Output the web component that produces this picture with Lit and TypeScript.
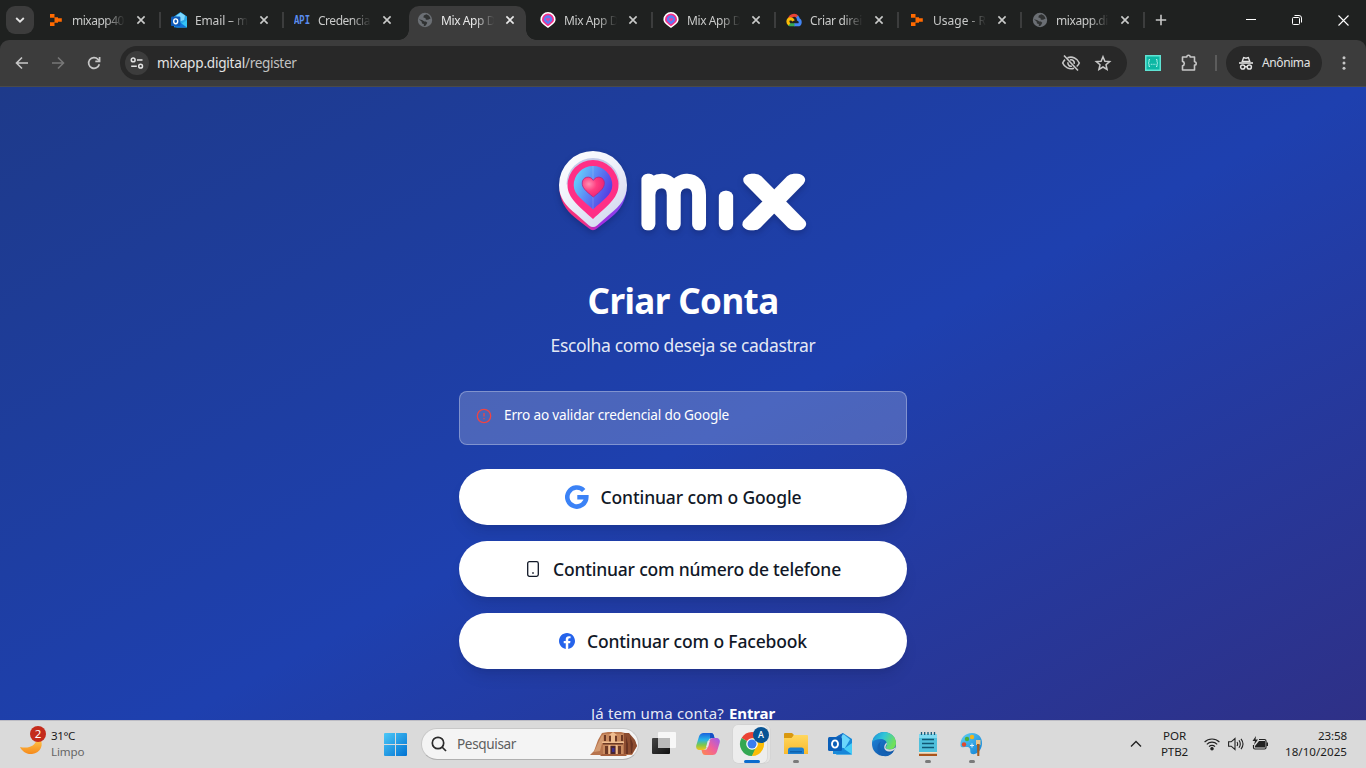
import { LitElement, html, css, svg } from "lit";

/** One line of text whose tracking is tuned so that it spans exactly `w` pixels. */
class FitText extends LitElement {
  static properties = { w: { type: Number } };
  declare w: number;
  static styles = css`
    :host { display: inline-block; white-space: nowrap; flex: none; }
  `;
  render() {
    return html`<span><slot></slot></span>`;
  }
  firstUpdated() {
    const n = (this.textContent || "").length;
    const span = this.renderRoot.querySelector("span") as HTMLElement;
    const natural = span.getBoundingClientRect().width;
    if (!n || !natural) return;
    this.style.letterSpacing = ((this.w - natural) / n).toFixed(3) + "px";
    this.style.width = this.w + "px";
  }
}
customElements.define("fit-text", FitText);

const crumbs = svg`<path fill="#ff6a00" d="M2 2h4.500v3.200H10V6.300h3.800v3.400H10v1.100H6.500V14H2v-3.800h4V5.800H2z"/><path fill="#1f2120" d="M6 5.600h1v4.600H6z" opacity=".5"/>`;
const outlookShape = svg`
  <path fill="#28a8ea" d="M3 4.500 9.500 0 16 4.500V15H3z"/><path fill="#7fd8ff" d="M5.500 3.500 9.700.7 14 3.500 13 8 9 9.500 5 8z"/>
  <path fill="#35c5f5" d="M16 6v9.400H5L16 8z"/><path fill="#1173d8" d="m3 15.600 4-6.500 9 6.500z"/>
  <rect x="0" y="4.500" width="9.400" height="9.600" rx="1.200" fill="#0f5bb8"/>
  <ellipse cx="4.700" cy="9.300" rx="2" ry="2.400" fill="none" stroke="#fff" stroke-width="1.400"/>`;
const globe = svg`<circle cx="8" cy="8" r="7.200" fill="#6b6f74"/>
  <path fill="#303232" d="M9.500 2.200 6.800 3.600l-.4 2 2 .5.5 1.600H11l2.600-1.300A6.200 6.200 0 0 0 9.500 2.200zM1.900 7.200 5 8l2.400 1.600h1.500l1.400 1.200-1.500 2.600-2 .8V12L5 11.400 4.600 9.600z"/>`;
const pin = svg`
  <path fill="#fff" d="M8 0a7.600 7.600 0 0 1 7.600 7.600c0 3.600-4 5.700-7.600 8.400C4.400 13.300.4 11.200.4 7.600A7.600 7.600 0 0 1 8 0z"/>
  <path fill="#f5318c" d="M8 1.500a6 6 0 0 1 6 6c0 2.700-3.200 4.500-6 6.800C5.200 12 2 10.200 2 7.500A6 6 0 0 1 8 1.500z"/>
  <path fill="#5b7cf5" d="M8 3.300a4.200 4.200 0 0 1 4.200 4.200c0 2-2.200 3.300-4.200 4.700-2-1.400-4.200-2.700-4.200-4.700A4.200 4.200 0 0 1 8 3.300z"/>
  <path fill="#e8409f" d="M8 9.500 6 7.600c-.7-1.200 1-2.300 2-1 1-1.300 2.700-.2 2 1z"/>`;
const cloud = svg`<g fill="none" stroke-width="3">
  <path stroke="#ea4335" d="M3.500 6.500A4.700 4.700 0 0 1 11.500 5"/><path stroke="#4285f4" d="M11 4.600c1 .8 1.300 1.700 1.400 2.900 2.500 1 2.600 5.300-.8 5.300H8"/>
  <path stroke="#34a853" d="M8.500 12.800H5c-1 0-1.600-.2-2.200-.6"/><path stroke="#fbbc05" d="M3.500 12.400C1 10.600 1.500 7 4.500 6.800c2 0 2.500 1 3 2"/></g>`;
const apiIcon = svg`<text x="0" y="12" font-family="Liberation Mono, monospace" font-weight="700" font-size="12" textLength="16" lengthAdjust="spacingAndGlyphs" fill="#5a8dee">API</text>`;

interface Tab { icon: unknown; label: string; active?: boolean; sep: boolean; w: number; }
const TABS: Tab[] = [
  { icon: crumbs, label: "mixapp40", sep: true, w: 52 },
  { icon: outlookShape, label: "Email – m", sep: true, w: 53 },
  { icon: apiIcon, label: "Credencia", sep: false, w: 52 },
  { icon: globe, label: "Mix App D", active: true, sep: false, w: 54 },
  { icon: pin, label: "Mix App D", sep: true, w: 54 },
  { icon: pin, label: "Mix App D", sep: true, w: 54 },
  { icon: cloud, label: "Criar direi", sep: true, w: 52 },
  { icon: crumbs, label: "Usage - R", sep: true, w: 53 },
  { icon: globe, label: "mixapp.di", sep: true, w: 52 },
];

class BrowserChrome extends LitElement {
  static styles = css`
    :host { display: block; height: 87px; font: 12px/16px "Noto Sans", sans-serif; color: #e3e3e3; flex: none; }
    svg { display: block; flex: none; }
    .strip { display: flex; height: 40px; background: #1f2120; padding-left: 6px; box-sizing: border-box; }
    .search { width: 28px; height: 28px; margin: 6px 6px 0 0; border-radius: 9px; background: #3c3c3c; display: grid; place-items: center; }
    .tab { width: 117px; height: 34px; margin: 6px 0 0; padding: 0 0 6px 8px; display: flex; align-items: center; box-sizing: border-box; color: #c9cac9; position: relative; }
    .tab.active { background: #3c3c3c; color: #e8e8e8; border-radius: 10px 10px 0 0; }
    .tab.active::before, .tab.active::after { content: ""; position: absolute; bottom: 0; width: 10px; height: 10px; }
    .tab.active::before { left: -10px; background: radial-gradient(circle at 0 0, transparent 9.5px, #3c3c3c 10px); }
    .tab.active::after { right: -10px; background: radial-gradient(circle at 100% 0, transparent 9.5px, #3c3c3c 10px); }
    .label { width: 56px; margin: 1px 8px 0 8px; -webkit-mask-image: linear-gradient(90deg, #000 60%, transparent 95%); mask-image: linear-gradient(90deg, #000 60%, transparent 95%); }
    .label fit-text { display: block; }
    .sep { width: 2px; height: 16px; margin: 12px 2px 0; background: #3c3d3d; }
    .sep.off { background: none; }
    .plus { margin: 14px 0 0 8px; }
    .win { margin-left: auto; display: flex; width: 138px; height: 40px; }
    .win span { flex: 1; display: grid; place-items: center; }
    .under { background: #1f2120; }
    .bar { display: flex; align-items: center; height: 47px; box-sizing: border-box; background: #3c3c3c; border-bottom: 1px solid #4a4a49; border-radius: 9px 9px 0 0; padding: 0 0 1px 14px; }
    .nav { display: flex; gap: 20px; margin-right: 18px; }
    .omni { width: 1007px; height: 34px; border-radius: 17px; background: #282828; display: flex; align-items: center; padding-left: 5px; box-sizing: border-box; }
    .chip { width: 24px; height: 24px; border-radius: 50%; background: #3c3c3c; display: grid; place-items: center; margin-right: 8px; }
    .url { font-size: 13.600px; line-height: 18px; }
    .path { color: #c2c2c2; }
    .tools { display: flex; gap: 12px; margin: 0 14px 0 auto; }
    .ext { margin-left: 18px; }
    .puzzle { margin-left: 18px; }
    .bar-sep { width: 2px; height: 16px; margin: 0 9px 0 16px; background: #5c5c5c; }
    .incog { width: 96px; height: 34px; border-radius: 17px; background: #282828; display: flex; align-items: center; gap: 8px; padding-left: 12px; box-sizing: border-box; }
    .dots { margin-left: 14px; }
  `;
  render() {
    return html`
      <div class="strip">
        <div class="search"><svg width="10" height="8" viewBox="0 0 10 8"><path d="M1.200 2 5 5.700 8.800 2" fill="none" stroke="#e3e3e3" stroke-width="1.800"/></svg></div>
        ${TABS.map((t) => html`
          <div class="tab ${t.active ? "active" : ""}">
            <svg width="16" height="16" viewBox="0 0 16 16">${t.icon}</svg>
            <div class="label"><fit-text w=${t.w}>${t.label}</fit-text></div>
            <svg width="10" height="10" viewBox="0 0 10 10"><path d="M1.400 1.400 8.600 8.600M8.600 1.400 1.400 8.600" stroke="currentColor" stroke-width="1.600"/></svg>
          </div>
          <div class="sep ${t.sep ? "" : "off"}"></div>`)}
        <svg class="plus" width="12" height="12" viewBox="0 0 12 12"><path d="M6 .8v10.400M.8 6h10.400" stroke="#c7c7c7" stroke-width="1.600"/></svg>
        <div class="win">
          <span><svg width="10" height="10" viewBox="0 0 10 10"><path d="M0 4.500h10" stroke="#fff"/></svg></span>
          <span><svg width="10" height="10" viewBox="0 0 10 10" fill="none" stroke="#fff"><rect x=".5" y="2.500" width="7" height="7" rx="1"/><path d="M2.500.5H7A2.500 2.500 0 0 1 9.500 3v4.500"/></svg></span>
          <span><svg width="11" height="11" viewBox="0 0 11 11"><path d="m.5.5 10 10m0-10-10 10" stroke="#fff" stroke-width="1.100"/></svg></span>
        </div>
      </div>
      <div class="under"><div class="bar">
        <div class="nav">
          <svg width="16" height="16" viewBox="0 0 16 16" fill="none" stroke="#c7c7c7" stroke-width="1.600"><path d="M14 8H3M8 2.500 2.500 8 8 13.500"/></svg>
          <svg width="16" height="16" viewBox="0 0 16 16" fill="none" stroke="#777" stroke-width="1.600"><path d="M2 8h11M8 2.500 13.500 8 8 13.500"/></svg>
          <svg width="16" height="16" viewBox="0 0 16 16" fill="none" stroke="#c7c7c7" stroke-width="1.700"><path d="M13.300 9.200A5.400 5.400 0 1 1 12 4.300l1.300 1.500"/><path d="M13.600 2v4.300H9.300"/></svg>
        </div>
        <div class="omni">
          <div class="chip"><svg width="14" height="14" viewBox="0 0 14 14" fill="none" stroke="#e3e3e3" stroke-width="1.500"><circle cx="3.200" cy="3.900" r="1.900"/><path d="M7 3.900h5.500M1.200 10.200h5.600"/><circle cx="10.600" cy="10.200" r="1.900"/></svg></div>
          <div class="url"><fit-text w="88">mixapp.digital</fit-text><fit-text class="path" w="51.5">/register</fit-text></div>
          <div class="tools">
            <svg width="20" height="20" viewBox="0 0 20 20" fill="none" stroke="#c7c7c7" stroke-width="1.600"><path d="M6.500 4.800A9 9 0 0 1 18.300 10a9.500 9.500 0 0 1-2.600 3.500M13 15.200A9 9 0 0 1 1.700 10 9.500 9.500 0 0 1 4 6.600M3 2.500 17 17.500M9 6.900a3.300 3.300 0 0 1 4.200 4M7 9.200a3.300 3.300 0 0 0 4 4"/></svg>
            <svg width="20" height="20" viewBox="0 0 20 20"><path d="m10 3.700 1.900 4.500 4.800.4-3.700 3.200 1.100 4.700-4.100-2.500-4.100 2.500L7 11.800 3.300 8.600l4.800-.4z" fill="none" stroke="#c7c7c7" stroke-width="1.500"/></svg>
          </div>
        </div>
        <svg class="ext" width="16" height="16" viewBox="0 0 16 16"><rect x=".75" y=".75" width="14.500" height="14.500" fill="#0db7a4" stroke="#5fe3d3" stroke-width="1.500"/><path d="M5 4.500H4v2.800l-.8.700.8.700v2.800h1M11 4.500h1v2.800l.8.700-.8.700v2.800h-1" fill="none" stroke="#b8f5ee" stroke-width=".9"/><path d="M5.800 9.300h1m.8 0h1m.8 0h1" stroke="#b8f5ee"/></svg>
        <svg class="puzzle" width="20" height="20" viewBox="0 0 20 20"><path d="M3.500 4h4.300a1.700 1.700 0 0 1 3.400 0h4.300v4.700a1.700 1.700 0 0 1 0 3.400V17h-12v-4.200c2.400-.4 2.400-4 0-4.400z" fill="none" stroke="#c7c7c7" stroke-width="1.600" stroke-linejoin="round"/></svg>
        <div class="bar-sep"></div>
        <div class="incog">
          <svg width="16" height="16" viewBox="0 0 16 16"><path fill="#e3e3e3" d="M5.200 1.800 8 2.500l2.800-.7L12.700 7H3.300z"/><path fill="#282828" d="m6 3.500 2 .4 2-.4.8 2.300H5.200z"/><path d="M1 8h14" stroke="#e3e3e3" stroke-width="1.600"/><circle cx="4.700" cy="12" r="2.100" fill="none" stroke="#e3e3e3" stroke-width="1.500"/><circle cx="11.300" cy="12" r="2.100" fill="none" stroke="#e3e3e3" stroke-width="1.500"/><path d="M6.700 11.700h2.600" stroke="#e3e3e3" stroke-width="1.400"/></svg>
          <fit-text w="48">Anônima</fit-text>
        </div>
        <svg class="dots" width="16" height="16" viewBox="0 0 16 16" fill="#c7c7c7"><circle cx="8" cy="2.800" r="1.500"/><circle cx="8" cy="8" r="1.500"/><circle cx="8" cy="13.200" r="1.500"/></svg>
      </div></div>`;
  }
}
customElements.define("browser-chrome", BrowserChrome);

class RegisterPage extends LitElement {
  static styles = css`
    :host { display: block; height: 633px; flex: none; overflow: hidden; font-family: "Noto Sans", sans-serif; color: #fff; }
    svg { display: block; flex: none; }
    .bg { height: 725px; display: flex; flex-direction: column; align-items: center; background: linear-gradient(to bottom right, #1e3a8a, #1e40af 50%, #312e81); }
    .logo { margin-top: 53px; filter: drop-shadow(0 3px 3px rgba(0, 0, 30, .22)); }
    h1 { margin: 29px 0 0; font-size: 35px; line-height: 44px; font-weight: 700; height: 44px; }
    .sub { margin: 9px 0 0; font-size: 17.500px; line-height: 26px; height: 28px; color: rgba(255, 255, 255, .9); }
    .alert { margin-top: 31px; width: 448px; height: 54px; box-sizing: border-box; border: 1px solid rgba(255, 255, 255, .3); border-radius: 8px; background: rgba(255, 255, 255, .2); padding: 13px 16px; display: flex; gap: 12px; font-size: 13.600px; line-height: 20px; }
    .alert svg { margin-top: 3px; }
    .buttons { display: flex; flex-direction: column; gap: 16px; margin-top: 24px; }
    .btn { width: 448px; height: 56px; border-radius: 28px; background: #fff; color: #111827; display: flex; align-items: center; justify-content: center; gap: 12px; font-size: 17.500px; line-height: 24px; font-weight: 500; box-shadow: 0 10px 15px -3px rgba(0, 0, 0, .1), 0 4px 6px -4px rgba(0, 0, 0, .1); }
    .foot { margin-top: 32px; font-size: 15px; line-height: 24px; color: rgba(255, 255, 255, .9); display: flex; gap: 5px; }
    .foot b { color: #fff; }
  `;
  render() {
    return html`<div class="bg">
      <svg class="logo" width="276" height="110" viewBox="0 0 276 110">
        <defs>
          <linearGradient id="edge" x1="0" x2="1"><stop offset=".35" stop-color="#f5307f"/><stop offset=".6" stop-color="#a32be0"/><stop offset="1" stop-color="#7c4df2"/></linearGradient>
          <linearGradient id="ring" x1="0" y1="0" x2=".7" y2="1"><stop offset="0" stop-color="#fff"/><stop offset=".45" stop-color="#f1f3fb"/><stop offset="1" stop-color="#d3d8ef"/></linearGradient>
          <linearGradient id="core" x1="0" y1=".2" x2="1" y2=".7"><stop offset="0" stop-color="#67d8fb"/><stop offset=".45" stop-color="#5b8af5"/><stop offset="1" stop-color="#5430e0"/></linearGradient>
          <radialGradient id="heart" cx=".3" cy=".35" r=".7"><stop offset="0" stop-color="#ff8fb4"/><stop offset=".5" stop-color="#ff3d80"/><stop offset="1" stop-color="#ee2574"/></radialGradient>
        </defs>
        <path fill="url(#edge)" d="M14.300 50C16 65 24 73 33 80l11 8.500q4 3.500 8 0L63 80c9-7 17-15 18.700-30z"/>
        <path fill="url(#ring)" d="M48 11a34 34 0 0 1 34 34c0 13-7 21-17 29L52 85.500q-4 3-8 0L31 74C21 66 14 58 14 45a34 34 0 0 1 34-34z"/>
        <path fill="#c3c9e8" d="M48 18a26.500 26.500 0 0 1 26.500 26.500H21.500A26.500 26.500 0 0 1 48 18z"/>
        <path fill="#ff2f86" d="M48 20a25.500 25.500 0 0 1 25.500 25.500C73.500 58 61 67 48 79 35 67 22.500 58 22.500 45.500A25.500 25.500 0 0 1 48 20z"/>
        <path fill="url(#core)" d="M48 26a19.300 19.300 0 0 1 19.300 19.300C67.300 55 57 61 48 69.500 39 61 28.700 55 28.700 45.300A19.300 19.300 0 0 1 48 26z"/>
        <path d="M48 26v43" stroke="#fff" stroke-opacity=".25" stroke-width=".7"/>
        <path fill="url(#heart)" stroke="#a82a86" stroke-width=".8" d="M48.300 57C40 50.500 37.200 47.500 37.200 43c0-6 7.800-8.300 11.100-2.600C51.600 34.700 59.400 37 59.400 43c0 4.500-2.800 7.500-11.100 14z"/>
        <g font-family="Inter, sans-serif" font-weight="100" fill="#fff" stroke="#fff" stroke-width="12.600" stroke-linejoin="round" stroke-linecap="round">
          <text x="95" y="83.500" font-size="81" textLength="67.500" lengthAdjust="spacingAndGlyphs">m</text>
          <text x="175.500" y="83.500" font-size="49" textLength="11" lengthAdjust="spacingAndGlyphs">ı</text>
          <text x="202.500" y="83.500" font-size="81" textLength="53.500" lengthAdjust="spacingAndGlyphs">x</text>
        </g>
      </svg>
      <h1><fit-text w="191">Criar Conta</fit-text></h1>
      <p class="sub"><fit-text w="265">Escolha como deseja se cadastrar</fit-text></p>
      <div class="alert">
        <svg width="16" height="16" viewBox="0 0 16 16"><circle cx="8" cy="8" r="6.700" fill="none" stroke="#ef4444" stroke-width="1.300"/><path d="M8 5v3.600M8 10v1.300" stroke="#ef4444" stroke-width="1.300"/></svg>
        <fit-text w="225">Erro ao validar credencial do Google</fit-text>
      </div>
      <div class="buttons">
        <div class="btn">
          <svg width="24" height="24" viewBox="0 0 24 24"><path d="M18.700 5.500A9.500 9.500 0 1 0 21.300 12.200H12.300" fill="none" stroke="#3b82f6" stroke-width="4.600"/></svg>
          <fit-text w="201">Continuar com o Google</fit-text>
        </div>
        <div class="btn">
          <svg width="16" height="16" viewBox="0 0 16 16"><rect x="2.700" y=".7" width="10.600" height="14.600" rx="1.700" fill="none" stroke="#111827" stroke-width="1.300"/><path d="M7.200 12h1.600" stroke="#111827" stroke-width="1.400"/></svg>
          <fit-text w="288">Continuar com número de telefone</fit-text>
        </div>
        <div class="btn">
          <svg width="16" height="16" viewBox="0 0 24 24"><path fill="#2563eb" d="M24 12.073c0-6.627-5.373-12-12-12s-12 5.373-12 12c0 5.990 4.388 10.954 10.125 11.854v-8.385H7.078v-3.470h3.047V9.430c0-3.007 1.792-4.669 4.533-4.669 1.312 0 2.686.235 2.686.235v2.953H15.830c-1.491 0-1.956.925-1.956 1.874v2.250h3.328l-.532 3.470h-2.796v8.385C19.612 23.027 24 18.062 24 12.073z"/></svg>
          <fit-text w="220">Continuar com o Facebook</fit-text>
        </div>
      </div>
      <div class="foot"><fit-text w="133">Já tem uma conta?</fit-text><b><fit-text w="46">Entrar</fit-text></b></div>
    </div>`;
  }
}
customElements.define("register-page", RegisterPage);

class TaskBar extends LitElement {
  static styles = css`
    :host { display: block; height: 48px; flex: none; font: 11.600px/16px "Noto Sans", sans-serif; color: #1b1b1b; }
    svg { display: block; flex: none; }
    .bar { height: 48px; box-sizing: border-box; background: #dadada; border-top: 1px solid #bcbcc4; padding-bottom: 1px; display: flex; align-items: center; }
    .weather { width: 364px; padding-left: 20px; box-sizing: border-box; display: flex; gap: 4px; }
    .weather svg { margin-top: -3px; }
    .lines { display: flex; flex-direction: column; }
    .dim { color: #666; }
    .start { margin: 0 14px 0 20px; }
    .search { width: 218px; height: 32px; box-sizing: border-box; border: 1px solid #c8c8c8; border-bottom-color: #b0b0b0; border-radius: 16px; background: #f4f4f4; display: flex; align-items: center; font-size: 13.600px; color: #5e5e5e; padding-left: 9px; gap: 10px; overflow: hidden; }
    .search .art { margin: 0 1px 0 auto; }
    .apps { display: flex; margin-left: 3px; }
    .app { width: 44px; height: 46px; display: flex; flex-direction: column; align-items: center; padding-top: 11px; box-sizing: border-box; }
    .dot { width: 6px; height: 3px; border-radius: 2px; background: #7a7a7a; margin-top: 4px; }
    .app.on { position: relative; z-index: 0; }
    .app.on::before, .app.on::after { content: ""; position: absolute; z-index: -1; top: 4px; left: 3px; width: 34px; height: 38px; border-radius: 5px; background: #ededed; box-shadow: 0 0 0 .5px #cfcfcf; }
    .app.on::after { left: 6px; z-index: -2; background: #e4e4e4; }
    .app.on .dot { background: #0a6cce; width: 16px; }
    .tray { margin-left: auto; display: flex; align-items: center; padding-right: 19px; }
    .lang { align-items: center; margin: 0 16px 0 19px; }
    .icons { display: flex; gap: 8px; }
    .clock { align-items: flex-end; margin: -1px 0 0 17px; }
  `;
  app(icon: unknown, cls = "", dot = false) {
    return html`<div class="app ${cls}"><svg width="24" height="24" viewBox="0 0 24 24" overflow="visible">${icon}</svg>${dot ? html`<span class="dot"></span>` : ""}</div>`;
  }
  render() {
    return html`<div class="bar">
      <div class="weather">
        <svg width="27" height="32" viewBox="0 0 27 32"><defs><linearGradient id="moon" x1="0" y1="0" x2="0" y2="1"><stop offset="0" stop-color="#ffc64a"/><stop offset="1" stop-color="#f58a1c"/></linearGradient></defs>
          <path fill="url(#moon)" d="M20 14c4 5 1 14-8 15C6 29.500 2 26 0 22c9 2 15-1 17-8z"/><circle cx="18" cy="9" r="8" fill="#c42b1c"/><text x="18" y="13" text-anchor="middle" font-family="Noto Sans, sans-serif" font-size="11.500" fill="#fff">2</text></svg>
        <div class="lines"><fit-text w="24">31°C</fit-text><fit-text class="dim" w="33.5">Limpo</fit-text></div>
      </div>
      <svg class="start" width="23" height="23" viewBox="0 0 23 23"><defs><linearGradient id="win" x1="0" y1="0" x2="1" y2="1" gradientUnits="objectBoundingBox"><stop offset="0" stop-color="#4cc8f7"/><stop offset="1" stop-color="#0072d2"/></linearGradient></defs><path fill="url(#win)" d="M0 1q0-1 1-1h10v11H0zM12 0h10q1 0 1 1v10H12zM0 12h11v11H1q-1 0-1-1zM12 12h11v10q0 1-1 1H12z"/></svg>
      <div class="search">
        <svg width="16" height="16" viewBox="0 0 16 16" fill="none" stroke="#2b2b2b" stroke-width="1.700"><circle cx="7" cy="7" r="5.700"/><path d="m11 11 4 4"/></svg>
        <fit-text w="59">Pesquisar</fit-text>
        <svg class="art" width="47" height="26" viewBox="0 0 47 26">
          <path fill="#b8754e" d="M0 24 4 20 8 9l4-7 6-1h13l8 2 6 7 2 5-5 9H2z"/><path fill="#8c4c30" d="M34 2h5l6 7 2 6-5 8h-8z"/><path fill="#d39b72" d="M4 21 12 4l2 1-4 15z"/>
          <path fill="#c98a5f" d="M13 3h20v20H13z"/><path fill="#6d3925" d="M14 4h2v6h-2zm5 1h2v6h-2zm6 0h2v6h-2zm6-1h2v6h-2zM13 12h20v1.500H13zM15 15h3v8h-3zm13 0h3v8h-3z"/>
          <path fill="#efbd90" d="m23 1 4 3h-8zM21 4h4v7h-4zM12 10.500h22v1.500H12zM18.500 14h2v9h-2zm7 0h2v9h-2z"/><path fill="#4a2530" d="M20.500 15h5v8h-5z"/><path fill="#3b2e8c" d="M22 17h2.500v4H22z"/>
          <path fill="#6a3422" d="m36 5 2 8v10h-2zm4 0 3 8-1 9h-1z"/><path fill="#a65f3c" d="M12 23h23l2 2H10z"/>
        </svg>
      </div>
      <div class="apps">
        ${this.app(svg`<defs><linearGradient id="dk" x1="0" y1="0" x2="1" y2="1"><stop stop-color="#444"/><stop offset="1" stop-color="#111"/></linearGradient></defs><rect x="0" y="6" width="18" height="16" rx="1" fill="url(#dk)"/><rect x="6" y="0" width="18" height="16" rx="1" fill="#f7f7f7"/><path fill="#b9b9b9" d="M6 6h12v10H6z"/>`)}
        ${this.app(svg`<defs><linearGradient id="cp1" x1="0" y1="0" x2="0" y2="1"><stop stop-color="#1a62dd"/><stop offset=".4" stop-color="#27b4e8"/><stop offset=".7" stop-color="#7cc84b"/><stop offset="1" stop-color="#f5c51b"/></linearGradient><linearGradient id="cp2" x1="1" y1="0" x2="0" y2="1"><stop stop-color="#9a5cf0"/><stop offset=".5" stop-color="#f0609a"/><stop offset="1" stop-color="#ff8a4a"/></linearGradient></defs>
          <path fill="url(#cp1)" d="M7.500 1H15q2 0 2.700 2L18.500 6h-3q-2.500 0-3.200 2.500L10.500 15q-.8 3-3.500 3H4c-3 0-4.500-2-3.600-5L3 4.500Q4.200 1 7.500 1z"/>
          <path fill="url(#cp2)" d="M16.500 23H9q-2 0-2.700-2L5.500 18h3q2.500 0 3.200-2.500L13.500 9q.8-3 3.500-3h3c3 0 4.500 2 3.600 5L21 19.500q-1.200 3.500-4.500 3.500z"/><path fill="#e7e3ee" d="M11.700 9h2l-1.600 6h-2z"/><path fill="#1550c5" d="M14 1h1q2 0 2.700 2l.8 3h-3q-1 0-1.500.5z"/>`)}
        ${this.app(svg`<g><path fill="#ea4335" d="M12 12 1.600 6A12 12 0 0 1 22.400 6z"/><path fill="#34a853" d="M12 12 1.600 6A12 12 0 0 0 12 24l5.200-9z"/><path fill="#fbbc05" d="M12 12h5.200L12 24A12 12 0 0 0 22.400 6H12z"/></g><circle cx="12" cy="12" r="5.800" fill="#fff"/><circle cx="12" cy="12" r="4.500" fill="#3b7ded"/><circle cx="21" cy="3" r="8" fill="#075495"/><text x="21" y="6.400" text-anchor="middle" font-family="Noto Sans, sans-serif" font-size="9" font-weight="500" fill="#fff">A</text>`, "on", true)}
        ${this.app(svg`<defs><linearGradient id="fo" x1="0" y1="0" x2="0" y2="1"><stop stop-color="#ffd75e"/><stop offset="1" stop-color="#f9b92c"/></linearGradient></defs><path fill="#d9980f" d="M0 2q0-1 1-1h7l2 2-2 4H0z"/><path fill="url(#fo)" d="M0 6h7.500L10 3h13q1 0 1 1v18H0z"/><path fill="#1d7fd0" d="M4 22v-4q0-2.500 2.500-2.500h11Q20 15.500 20 18v4z"/><path fill="#0c60ad" d="M6 19h12v1.500H6z"/>`, "", true)}
        ${this.app(svg`<path fill="#198ad8" d="M5 6.500 15 1l9 6V22H5z"/><path fill="#6bd6fb" d="M13 2.500h3l6 5-5 8.500h-5z"/><path fill="#1564c0" d="M9 4.500 15 1 12 9z"/><path fill="#46cdf7" d="M24 8v14.500H8L24 11z"/><path fill="#1686d9" d="m8 22.500 6-7 10 7z"/><rect y="5" width="14" height="14" rx="1.500" fill="#0b5fb8"/><ellipse cx="7" cy="12" rx="3" ry="3.600" fill="none" stroke="#fff" stroke-width="1.900"/>`)}
        ${this.app(svg`<defs><linearGradient id="ed" x1="0" y1="0" x2="1" y2=".4"><stop stop-color="#1a8fd8"/><stop offset=".5" stop-color="#30c5d8"/><stop offset="1" stop-color="#70e05a"/></linearGradient><linearGradient id="ed2" x1="0" y1="0" x2="1" y2="1"><stop stop-color="#2089e0"/><stop offset="1" stop-color="#0c4a98"/></linearGradient></defs><circle cx="12" cy="12" r="12" fill="url(#ed2)"/><path fill="url(#ed)" d="M.2 10.500C1 4.500 6 0 12.200 0 19 0 24 5 24 11c0 4-2.500 6.500-6 6.500-2.500 0-4.300-.8-4.300-2 0-.8 1.300-1.200 1.300-3.500 0-2.500-2.500-5-6.200-5C4.500 7 1.500 8.500.2 10.500z"/><path fill="#dadada" d="M14.800 10.500c.6 2.500-1.300 3.300-1.300 5 0 1.300 2 2 4.500 2 2 0 4-.8 5-2l.2 1.700c-1.800 1.800-4.200 2.300-6.200 2.300-5 0-6.700-6-2.200-9z"/><path fill="#1461b4" d="M9 9.500c-3 5 .5 11.500 7.500 11.500 2 0 3.800-.6 5-1.500C17 27 5 25.500 5.500 15.500 5.600 12.500 7 10.500 9 9.500z"/>`)}
        ${this.app(svg`<path fill="#4fc0dc" d="M3 2h18v18H3z"/><path fill="#7fdaf0" d="M3 2h18v4H3z"/><path d="M5.500 0v3M8.700 0v3M12 0v3M15.300 0v3M18.500 0v3" stroke="#175a78" stroke-width="1.300"/><path d="M6 7.500h12M6 11.500h12M6 15.500h12" stroke="#105774" stroke-width="1.600"/><path fill="#a9541a" d="M3 21.500h18V24H3z"/><path fill="#f3e2c5" d="M3 20h18v1.500H3z"/>`, "", true)}
        ${this.app(svg`<defs><linearGradient id="pa" x1="0" y1="0" x2="1" y2="1"><stop stop-color="#5fd0f5"/><stop offset="1" stop-color="#1180d4"/></linearGradient></defs><path fill="url(#pa)" d="M12 1c7 0 10.500 5 10 11-.5 7-6 11-10 10-3-1-.5-5-3-6.500S1 17 .5 13.500C0 6 5 1 12 1z"/><circle cx="7" cy="7" r="2.200" fill="#4caf36"/><circle cx="12" cy="5" r="2.200" fill="#f7b519"/><circle cx="4" cy="12.500" r="2.200" fill="#e2492e"/><path d="M12 11.500v4M10 13.500h4" stroke="#dff4ff"/><path fill="#e8c590" d="M16 8h4.500v5H16z"/><path fill="#a35c22" d="M17 12h2.600l-.3 12h-2z"/>`, "", true)}
      </div>
      <div class="tray">
        <svg width="12" height="8" viewBox="0 0 12 8"><path d="m1 6.500 5-5 5 5" fill="none" stroke="#222" stroke-width="1.400"/></svg>
        <div class="lines lang"><fit-text w="23">POR</fit-text><fit-text w="27">PTB2</fit-text></div>
        <div class="icons">
          <svg width="16" height="16" viewBox="0 0 16 16" fill="none" stroke="#222" stroke-width="1.100"><path d="M.6 6a10.500 10.500 0 0 1 14.800 0M2.800 8.300a7.300 7.300 0 0 1 10.400 0M5 10.600a4.200 4.200 0 0 1 6 0"/><circle cx="8" cy="12.800" r="1.200" fill="#222"/></svg>
          <svg width="16" height="16" viewBox="0 0 16 16" fill="none" stroke="#222" stroke-width="1.100"><path d="M.6 5.800h2.600L7 2.500v11L3.200 10.200H.6zM9 6q1.300 2 0 4M11 4.300q2.600 3.700 0 7.400M13 2.800q4 5.200 0 10.400"/></svg>
          <svg width="16" height="16" viewBox="0 0 16 16"><path fill="#222" d="M4 0 .5 5H3L2 9l4-5.500H3.500zM7 5h6v6.500H3V10z"/><path d="M7 3.500h5.500q1.500 0 1.500 1.500v6.500q0 1.500-1.500 1.500H3q-1.500 0-1.500-1.500V9" fill="none" stroke="#222" stroke-width="1.200"/><path fill="#222" d="M14.500 6.500H16v3.500h-1.500z"/></svg>
        </div>
        <div class="lines clock"><fit-text w="29">23:58</fit-text><fit-text w="62">18/10/2025</fit-text></div>
      </div>
    </div>`;
  }
}
customElements.define("task-bar", TaskBar);

class AppRoot extends LitElement {
  static styles = css`
    :host { display: flex; flex-direction: column; width: 1366px; height: 768px; overflow: hidden; }
  `;
  render() {
    return html`<browser-chrome></browser-chrome><register-page></register-page><task-bar></task-bar>`;
  }
}
customElements.define("app-root", AppRoot);
